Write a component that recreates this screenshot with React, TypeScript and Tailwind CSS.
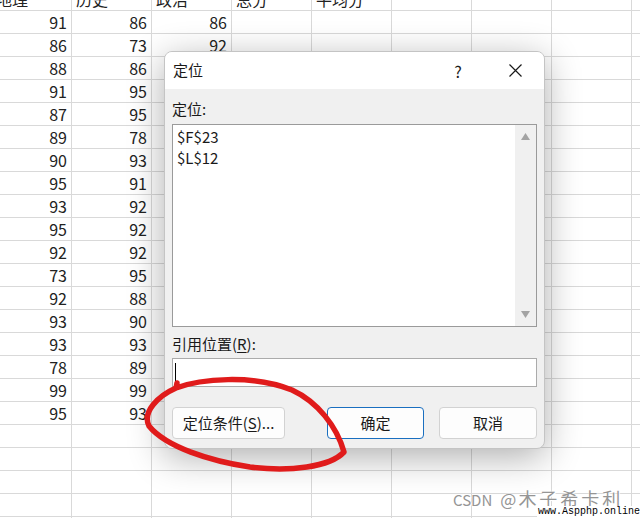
import React from 'react';

const headers = ['地理', '历史', '政治', '总分', '平均分', '', '', '', ''];

const scores: [number, number, number | null][] = [
  [91, 86, 86],
  [86, 73, 92],
  [88, 86, 90],
  [91, 95, 88],
  [87, 95, 91],
  [89, 78, 85],
  [90, 93, 94],
  [95, 91, 89],
  [93, 92, 90],
  [95, 92, 93],
  [92, 92, 87],
  [73, 95, 92],
  [92, 88, 91],
  [93, 90, 86],
  [93, 93, 95],
  [78, 89, 88],
  [99, 99, 97],
  [95, 93, 92],
];

function Sheet() {
  const rows = Array.from({ length: 23 }, (_, i) => scores[i] ?? null);
  return (
    <div className="-ml-[8px] -mt-[12px] flex flex-col">
      {/* Header row */}
      <div className="flex">
        {headers.map((h, i) => (
          <div
            key={i}
            className="w-[80px] h-[23px] shrink-0 border-r border-b border-[#d9d9d9] pl-[4px] text-[16px] leading-[22px] text-[#222] whitespace-nowrap"
          >
            {h}
          </div>
        ))}
      </div>
      {/* Data rows */}
      {rows.map((r, ri) => (
        <div key={ri} className="flex">
          {headers.map((_, ci) => (
            <div
              key={ci}
              className="w-[80px] h-[23px] shrink-0 border-r border-b border-[#d9d9d9] pr-[4px] text-right text-[16px] leading-[22px] text-[#222]"
            >
              {r && ci < 3 ? r[ci] : ''}
            </div>
          ))}
        </div>
      ))}
    </div>
  );
}

function Dialog() {
  return (
    <div className="absolute left-[164px] top-[51px] w-[381px] h-[398px] rounded-[8px] border border-[#c4c4c4] bg-[#f0f0f0] shadow-[0_8px_36px_rgba(0,0,0,0.32)] overflow-hidden flex flex-col">
      {/* Title bar */}
      <div className="h-[37px] bg-white flex items-center pl-[8px] shrink-0">
        <span className="text-[15px] text-[#1a1a1a]">定位</span>
        <div className="flex-1" />
        <div className="w-[46px] flex justify-center text-[16px] text-[#1a1a1a]">?</div>
        <div className="w-[46px] ml-[11px] mr-[6px] flex justify-center">
          <svg width="13" height="13" viewBox="0 0 13 13">
            <path d="M0.5 0.5 L12.5 12.5 M12.5 0.5 L0.5 12.5" stroke="#1a1a1a" strokeWidth="1.2" fill="none" />
          </svg>
        </div>
      </div>

      {/* Body */}
      <div className="flex-1 flex flex-col px-[7px] pt-[10px]">
        <div className="h-[20px] text-[15px] leading-[20px] text-[#1a1a1a]">定位:</div>
        <div className="mt-[5px] h-[203px] border border-[#9a9a9a] bg-white flex">
          <div className="flex-1 pl-[4px] pt-[1px] text-[15px] leading-[21px] text-[#1a1a1a]">
            <div>$F$23</div>
            <div>$L$12</div>
          </div>
          <div className="w-[21px] bg-[#f0f0f0] flex flex-col items-center justify-between pt-[8px] pb-[8px]">
            <svg width="9" height="7" viewBox="0 0 9 7">
              <path d="M4.5 0 L9 7 L0 7 Z" fill="#a3a3a3" />
            </svg>
            <svg width="9" height="7" viewBox="0 0 9 7">
              <path d="M0 0 L9 0 L4.5 7 Z" fill="#a3a3a3" />
            </svg>
          </div>
        </div>

        <div className="mt-[7px] h-[20px] text-[15px] leading-[20px] text-[#1a1a1a]">
          引用位置(<span className="underline underline-offset-2">R</span>):
        </div>
        <div className="mt-[4px] h-[29px] border border-[#ababab] bg-white flex items-center pl-[2px]">
          <div className="w-[1px] h-[19px] bg-black" />
        </div>

        <div className="mt-[20px] flex items-center">
          <button className="w-[113px] h-[32px] rounded-[4px] border border-[#d2d2d2] bg-[#fdfdfd] text-[15px] text-[#1a1a1a]">
            定位条件(<span className="underline underline-offset-2">S</span>)...
          </button>
          <div className="flex-1" />
          <button className="w-[97px] h-[32px] rounded-[4px] border border-[#1a6fc0] bg-[#fdfdfd] text-[15px] text-[#1a1a1a]">
            确定
          </button>
          <button className="ml-[15px] w-[98px] h-[32px] rounded-[4px] border border-[#d2d2d2] bg-[#fdfdfd] text-[15px] text-[#1a1a1a]">
            取消
          </button>
        </div>
      </div>
    </div>
  );
}

export default function App() {
  return (
    <div className="relative w-[640px] h-[518px] overflow-hidden bg-white font-['Noto_Sans_CJK_SC',sans-serif]">
      <Sheet />
      <Dialog />

      {/* Red hand-drawn circle */}
      <svg className="absolute left-0 top-0 pointer-events-none" width="640" height="518" viewBox="0 0 640 518">
        <path
          d="M177 383 L176 388 C200 379 252 374 292 390 C318 402 337 427 344 452 C330 467 290 472 250 467 C210 461 166 447 149 426 C142 412 158 396 176 388"
          stroke="#e01b1b"
          strokeWidth="5.5"
          fill="none"
          strokeLinecap="round"
          strokeLinejoin="round"
        />
      </svg>

      {/* Watermarks */}
      <div className="absolute left-[453px] top-[485px] text-[#959595] [text-shadow:0_0_2px_#fff,1px_1px_0_#fff] whitespace-nowrap flex items-baseline">
        <span className="text-[15px]">CSDN</span>
        <span className="ml-[8px] text-[17px]">@</span>
        <span className="ml-[2px] text-[18px] tracking-[3px]">木子希卡利</span>
      </div>
      <div className="absolute right-0 bottom-0 bg-white pl-[1px] font-['Liberation_Mono',monospace] text-[10px] leading-[12px] text-black">
        www.Aspphp.online
      </div>
    </div>
  );
}
